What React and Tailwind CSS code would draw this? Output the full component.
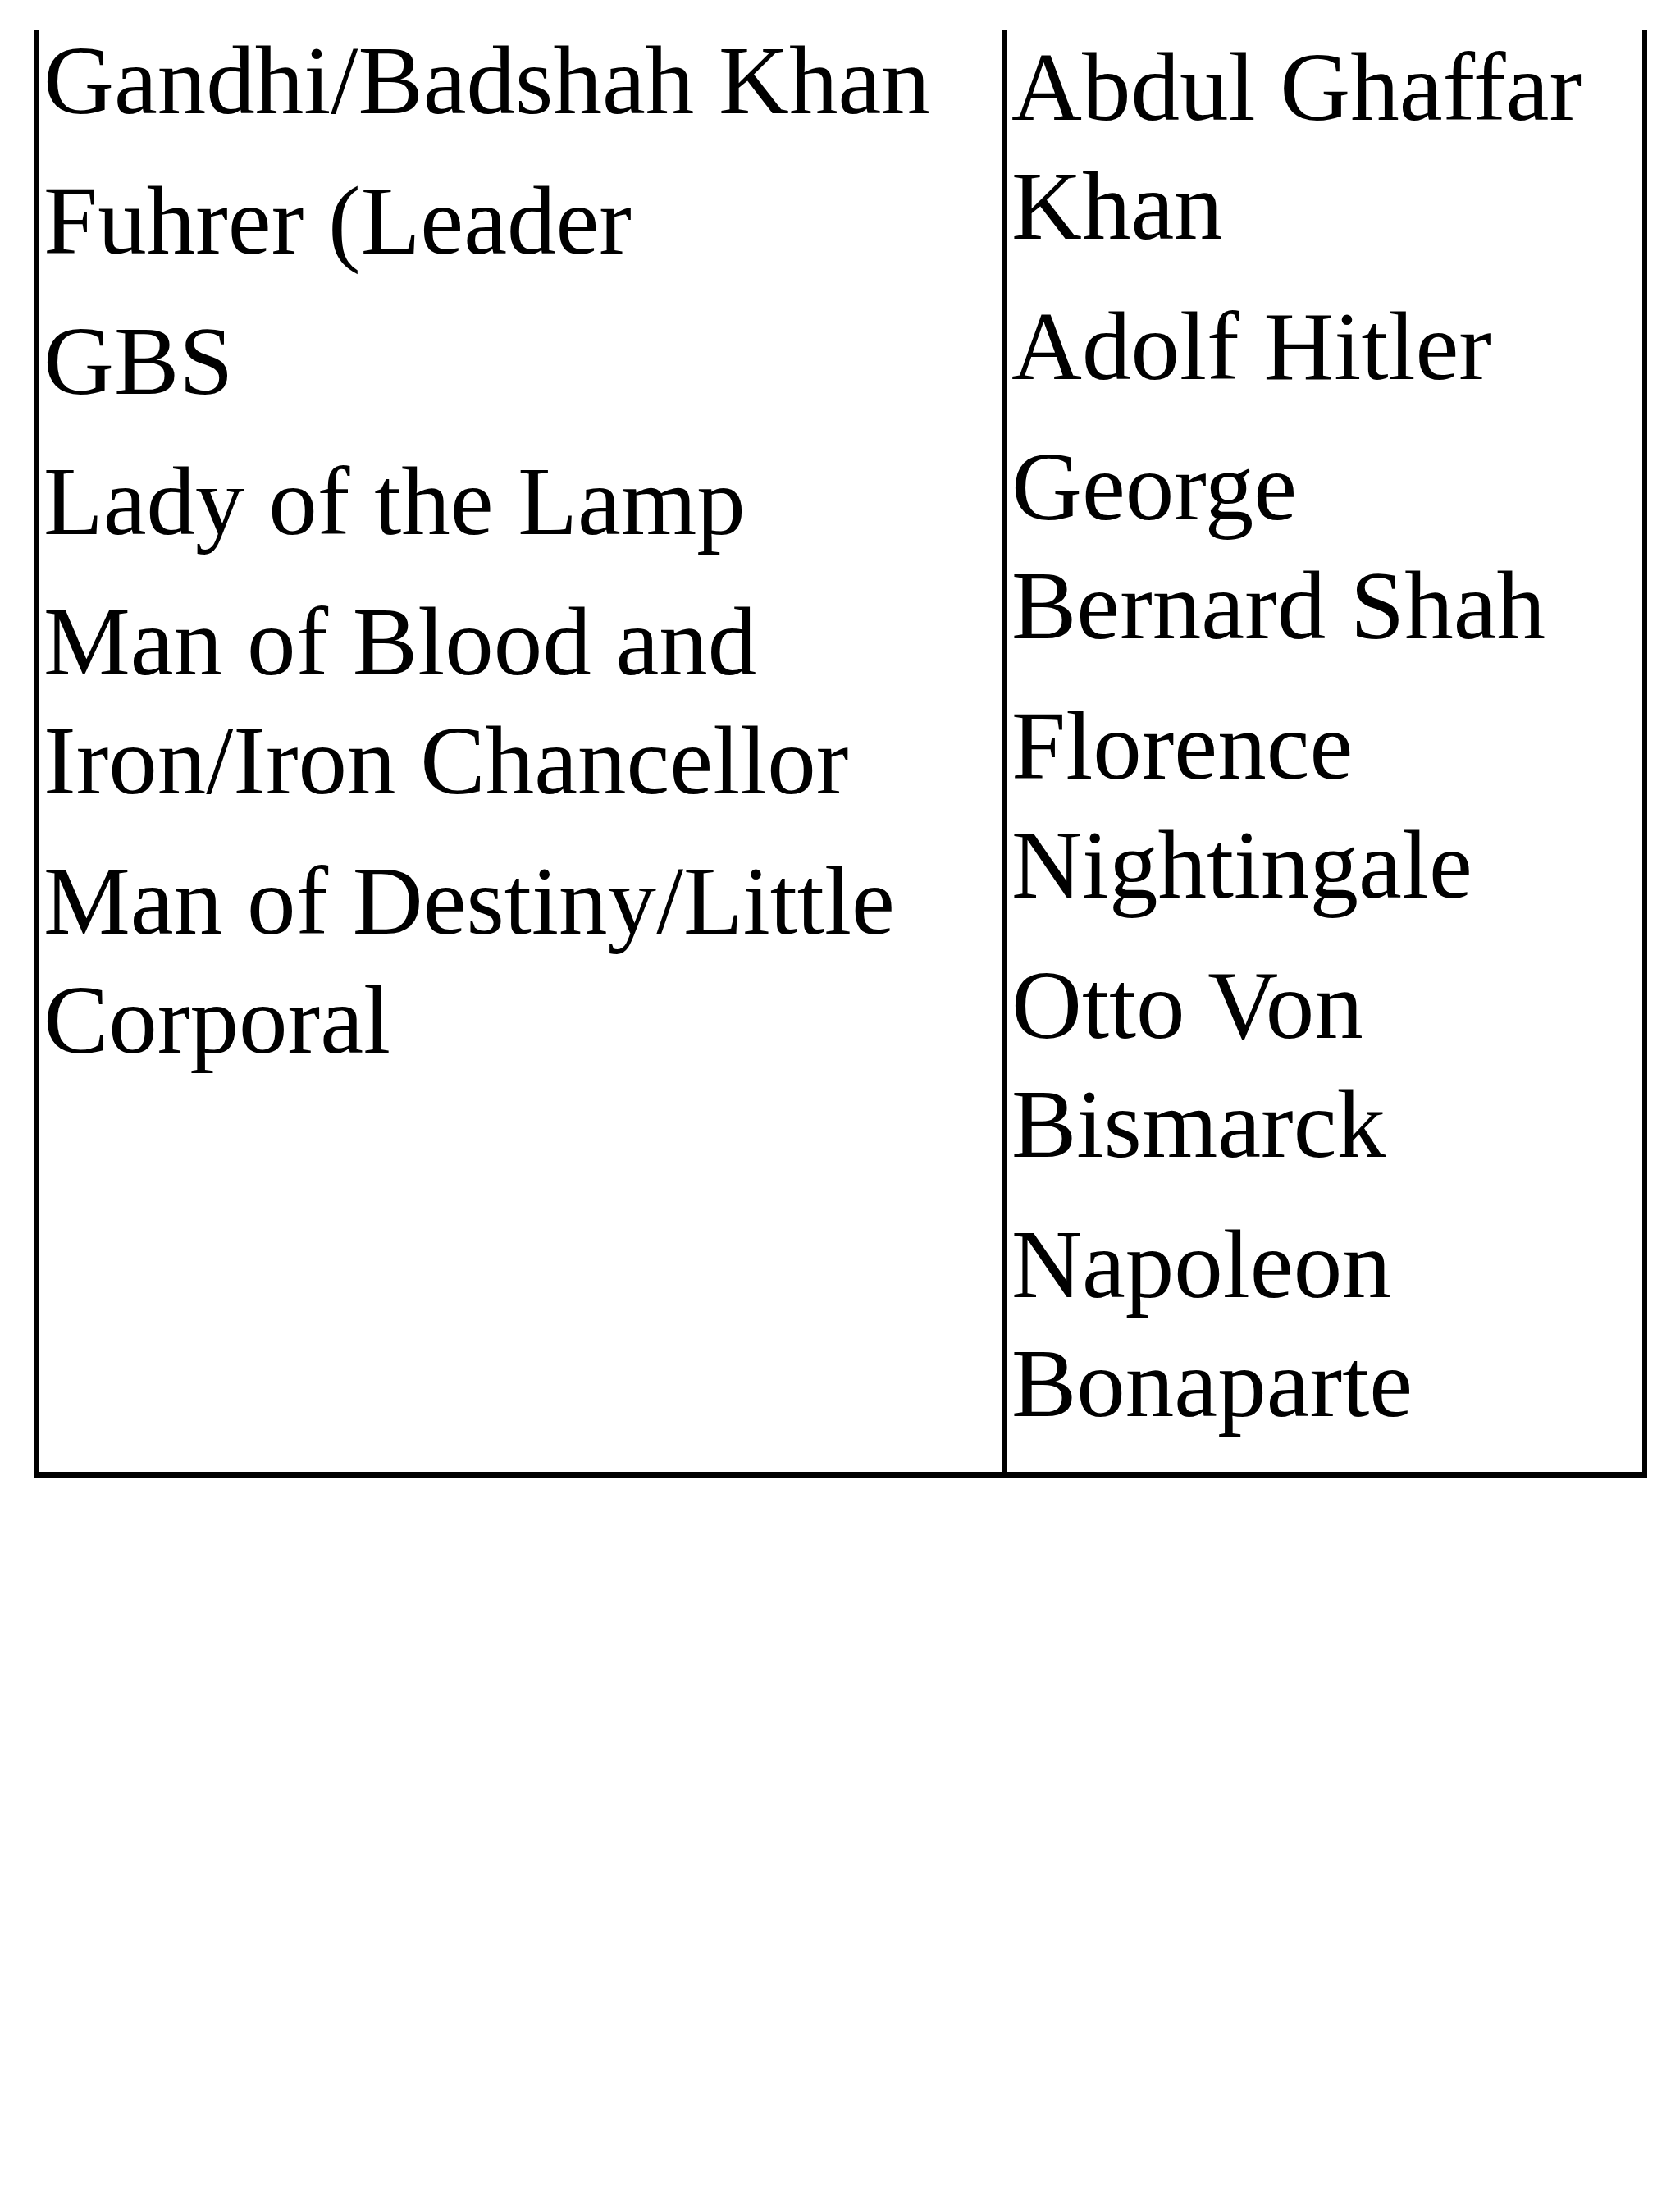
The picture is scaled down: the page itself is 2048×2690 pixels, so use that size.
const leftItems = [
  ["Gandhi/Badshah Khan"],
  ["Fuhrer (Leader"],
  ["GBS"],
  ["Lady of the Lamp"],
  ["Man of Blood and", "Iron/Iron Chancellor"],
  ["Man of Destiny/Little", "Corporal"],
];

const rightItems = [
  ["Abdul Ghaffar", "Khan"],
  ["Adolf Hitler"],
  ["George", "Bernard Shah"],
  ["Florence", "Nightingale"],
  ["Otto Von", "Bismarck"],
  ["Napoleon", "Bonaparte"],
];

const Entry = ({ lines }) => (
  <p>
    {lines.map((line, i) => (
      <span key={i} className="block whitespace-nowrap">
        {line}
      </span>
    ))}
  </p>
);

const App = () => {
  return (
    <div className="min-h-screen bg-white pt-[36px] pl-[41px] text-black [font-family:'Liberation_Serif','Times_New_Roman',serif] text-[119px] leading-[145px]">
      <div className="grid w-[1967px] grid-cols-[1181px_786px] border-b-[7px] border-black">
        {/* Titles */}
        <div className="border-l-[6px] border-black pl-[6px]">
          <div className="-mt-[10px] flex flex-col gap-[26px]">
            {leftItems.map((lines, i) => (
              <Entry key={i} lines={lines} />
            ))}
          </div>
        </div>

        {/* Names */}
        <div className="border-l-[6px] border-r-[6px] border-black pl-[5px] pb-[35px]">
          <div className="-mt-[2px] flex flex-col gap-[26px]">
            {rightItems.map((lines, i) => (
              <Entry key={i} lines={lines} />
            ))}
          </div>
        </div>
      </div>
    </div>
  );
};

export default App;
